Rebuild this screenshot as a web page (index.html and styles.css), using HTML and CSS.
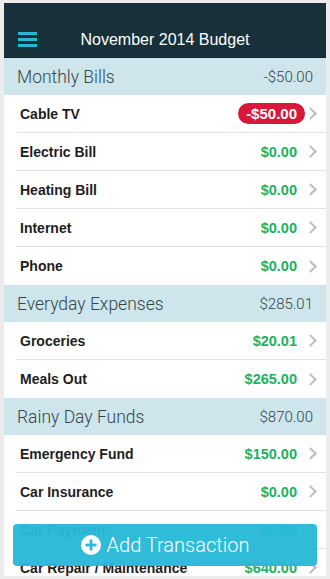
FILE: index.html
```html
<!DOCTYPE html>
<html>
<head>
<meta charset="utf-8">
<link rel="stylesheet" href="styles.css">
</head>
<body>
<div class="device">
  <header class="nav">
    <svg class="menu" width="19" height="15" viewBox="0 0 19 15"><rect x="0" y="0" width="19" height="3" fill="#27b7d4"/><rect x="0" y="6" width="19" height="3" fill="#27b7d4"/><rect x="0" y="12" width="19" height="3" fill="#27b7d4"/></svg>
    <div class="title">November 2014 Budget</div>
  </header>
  <div class="list">
    <div class="section"><span>Monthly Bills</span><span>-$50.00</span></div>
    <div class="row"><span class="name">Cable TV</span><span class="amt neg">-$50.00</span><span class="chev"></span></div>
    <div class="row"><span class="name">Electric Bill</span><span class="amt">$0.00</span><span class="chev"></span></div>
    <div class="row"><span class="name">Heating Bill</span><span class="amt">$0.00</span><span class="chev"></span></div>
    <div class="row"><span class="name">Internet</span><span class="amt">$0.00</span><span class="chev"></span></div>
    <div class="row last"><span class="name">Phone</span><span class="amt">$0.00</span><span class="chev"></span></div>
    <div class="section"><span>Everyday Expenses</span><span>$285.01</span></div>
    <div class="row"><span class="name">Groceries</span><span class="amt">$20.01</span><span class="chev"></span></div>
    <div class="row last"><span class="name">Meals Out</span><span class="amt">$265.00</span><span class="chev"></span></div>
    <div class="section"><span>Rainy Day Funds</span><span>$870.00</span></div>
    <div class="row"><span class="name">Emergency Fund</span><span class="amt">$150.00</span><span class="chev"></span></div>
    <div class="row"><span class="name">Car Insurance</span><span class="amt">$0.00</span><span class="chev"></span></div>
    <div class="row"><span class="name">Car Payment</span><span class="amt">$0.00</span><span class="chev"></span></div>
    <div class="row"><span class="name">Car Repair / Maintenance</span><span class="amt">$640.00</span><span class="chev"></span></div>
  </div>
  <div class="add">
    <svg width="20" height="20" viewBox="0 0 20 20"><circle cx="10" cy="10" r="10" fill="#fff"/><rect x="4.5" y="8.6" width="11" height="2.8" fill="#2cbad8"/><rect x="8.6" y="4.5" width="2.8" height="11" fill="#2cbad8"/></svg>
    <span>Add Transaction</span>
  </div>
</div>
</body>
</html>
```
FILE: styles.css
```css
html, body { margin: 0; padding: 0; }
body {
  background: #ececec;
  width: 330px;
  height: 579px;
  padding: 3px 4px;
  box-sizing: border-box;
  overflow: hidden;
}
.device {
  position: relative;
  width: 322px;
  height: 573px;
  background: #fff;
  overflow: hidden;
  font-family: "Liberation Sans", Arial, sans-serif;
}
.nav {
  height: 55px;
  background: #183039;
  box-sizing: border-box;
  border-bottom: 1px dotted #0c1c22;
  display: flex;
  align-items: center;
  padding-top: 19px;
  padding-left: 14px;
  position: relative;
}
.menu { display: block; }
.title {
  flex: 1;
  text-align: center;
  color: #fff;
  font-family: "Liberation Sans", Arial, sans-serif;
  font-weight: normal;
  font-size: 16px;
  padding-right: 33px;
}
.section {
  height: 37px;
  background: #cde5eb;
  display: flex;
  align-items: center;
  justify-content: space-between;
  padding: 0 13px 0 13px;
  font-family: "Roboto", "Liberation Sans", sans-serif;
  font-weight: 300;
  color: #34454c;
  font-size: 17.5px;
}
.section span:last-child { font-size: 15px; }
.row {
  height: 38px;
  box-sizing: border-box;
  margin-left: 12px;
  border-bottom: 1px solid #e2e2e2;
  display: flex;
  align-items: center;
  padding-left: 4px;
  padding-right: 8px;
}
.row.last { border-bottom: none; }
.name {
  flex: 1;
  font-weight: bold;
  font-size: 14px;
  color: #1e1e1e;
}
.amt {
  font-weight: bold;
  font-size: 14.5px;
  color: #1bb35c;
}
.amt.neg {
  background: #d9173a;
  color: #fff;
  border-radius: 11px;
  padding: 2px 8px;
  line-height: 17px;
  font-size: 15px;
  margin-right: -8px;
}
.chev {
  width: 7px;
  height: 7px;
  border-top: 2px solid #bcbcbc;
  border-right: 2px solid #bcbcbc;
  transform: rotate(45deg);
  margin-left: 9px;
  margin-right: 3px;
}
.add {
  position: absolute;
  left: 9px;
  top: 521px;
  width: 304px;
  height: 42px;
  background: rgba(40, 184, 215, 0.96);
  border-radius: 4px;
  display: flex;
  align-items: center;
  justify-content: center;
  gap: 6px;
  color: #fff;
  font-family: "Roboto", "Liberation Sans", sans-serif;
  font-weight: 300;
  font-size: 20px;
}
.add svg { display: block; }
```
